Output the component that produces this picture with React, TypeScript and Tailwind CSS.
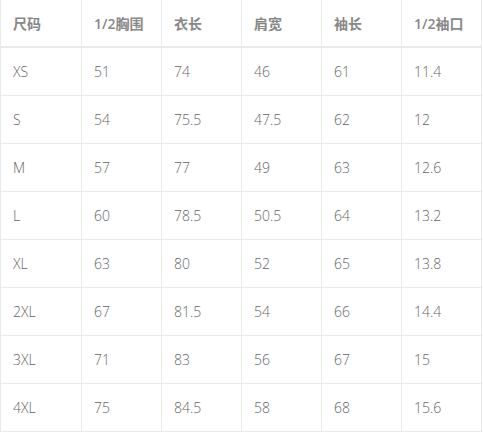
const headers = ['尺码', '1/2胸围', '衣长', '肩宽', '袖长', '1/2袖口']

const rows = [
  ['XS', '51', '74', '46', '61', '11.4'],
  ['S', '54', '75.5', '47.5', '62', '12'],
  ['M', '57', '77', '49', '63', '12.6'],
  ['L', '60', '78.5', '50.5', '64', '13.2'],
  ['XL', '63', '80', '52', '65', '13.8'],
  ['2XL', '67', '81.5', '54', '66', '14.4'],
  ['3XL', '71', '83', '56', '67', '15'],
  ['4XL', '75', '84.5', '58', '68', '15.6'],
]

export default function App() {
  return (
    <div className="w-[483px] h-[432px] bg-white overflow-hidden font-['Segoe_UI','Open_Sans','Noto_Sans_CJK_SC',sans-serif]">
      <table className="border-collapse table-fixed w-[482px] text-[14px]">
        <colgroup>
          <col className="w-[81px]" />
          <col className="w-[80px]" />
          <col className="w-[80px]" />
          <col className="w-[80px]" />
          <col className="w-[80px]" />
          <col className="w-[80px]" />
        </colgroup>
        <thead>
          <tr className="h-[47px]">
            {headers.map((h) => (
              <th
                key={h}
                className="px-3 text-left font-semibold text-[#888] border-x border-b-2 border-[#e8eaec]"
              >
                {h}
              </th>
            ))}
          </tr>
        </thead>
        <tbody>
          {rows.map((r) => (
            <tr key={r[0]} className="h-[48px]">
              {r.map((c, i) => (
                <td key={i} className="px-3 text-left font-light text-[#666] border border-[#e8eaec]">
                  {c}
                </td>
              ))}
            </tr>
          ))}
        </tbody>
      </table>
    </div>
  )
}
